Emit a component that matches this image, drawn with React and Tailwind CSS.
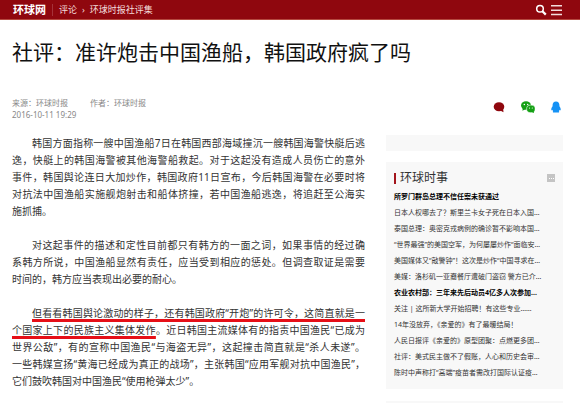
import React from 'react';

const paragraphs = [
  [
    '韩国方面指称一艘中国渔船7日在韩国西部海域撞沉一艘韩国海警快艇后逃',
    '逸，快艇上的韩国海警被其他海警船救起。对于这起没有造成人员伤亡的意外',
    '事件，韩国舆论连日大加炒作，韩国政府11日宣布，今后韩国海警在必要时将',
    '对抗法中国渔船实施舰炮射击和船体挤撞，若中国渔船逃逸，将追赶至公海实',
    '施抓捕。',
  ],
  [
    '对这起事件的描述和定性目前都只有韩方的一面之词，如果事情的经过确',
    '系韩方所说，中国渔船显然有责任，应当受到相应的惩处。但调查取证是需要',
    '时间的，韩方应当表现出必要的耐心。',
  ],
  [
    <Marked>但看看韩国舆论激动的样子，还有韩国政府“开炮”的许可令，这简直就是一</Marked>,
    <><Marked>个国家上下的民族主义集体发作</Marked>。近日韩国主流媒体有的指责中国渔民“已成为</>,
    '世界公敌”，有的宣称中国渔民“与海盗无异”，这起撞击简直就是“杀人未遂”。',
    '一些韩媒宣扬“黄海已经成为真正的战场”，主张韩国“应用军舰对抗中国渔民”，',
    '它们鼓吹韩国对中国渔民“使用枪弹太少”。',
  ],
];

const news = [
  { title: '所罗门群岛总理不信任案未获通过', bold: true },
  { title: '日本人权哪去了？斯里兰卡女子死在日本入国…' },
  { title: '泰国总理：奥密克戎病例的确诊暂不影响本国…' },
  { title: '“世界最强”的美国空军，为何屡屡炒作“面临安…' },
  { title: '美国媒体又“敲警钟”！这次是炒作“中国寻求在…' },
  { title: '美媒：洛杉矶一亚裔餐厅遭破门盗窃 警方已介…' },
  { title: '农业农村部：三年来先后动员4亿多人次参加…', bold: true },
  { title: '关注 | 这所新大学开始招聘！有这些专业……' },
  { title: '14年没放弃，《亲爱的》有了最暖结局！' },
  { title: '人民日报评《亲爱的》原型团聚：点燃更多团…' },
  { title: '社评：美式民主做不了假账，人心和历史会审…' },
  { title: '陈时中声称打“高端”疫苗者需改打国际认证疫…' },
];

function Marked({ children }) {
  return (
    <span className="underline decoration-[#e60f17] decoration-[3px] underline-offset-2 [text-decoration-skip-ink:none]">
      {children}
    </span>
  );
}

const Header = () => (
  <header className="flex h-5 items-center justify-between border-b border-[#b5483f] bg-[#8f070e] pl-[13px] pr-[18px] text-white">
    <nav className="flex items-center text-[9px] leading-none text-[#f3dcdc]">
      <a href="#" className="text-[11px] font-bold text-white">环球网</a>
      <span className="mx-[6px] h-3 w-px bg-[#a53239]"></span>
      <a href="#">评论</a>
      <span className="mx-[5px]">›</span>
      <a href="#">环球时报社评集</a>
    </nav>
    <div className="flex items-center gap-1">
      <button aria-label="搜索">
        <svg className="block h-3 w-3" viewBox="0 0 12 12" fill="none" stroke="currentColor">
          <circle cx="5" cy="4.7" r="3.3" strokeWidth="1.5" />
          <path d="M7.4 7.2l3.4 3.4" strokeWidth="2.2" />
        </svg>
      </button>
      <button aria-label="菜单">
        <svg className="block h-3 w-[11px]" viewBox="0 0 11 12" fill="#f3dcdc">
          <path d="M0 1h11v1.5H0zM0 5.4h11v1.5H0zM0 9.8h11v1.5H0z" />
        </svg>
      </button>
    </div>
  </header>
);

const Share = () => (
  <div className="flex items-center gap-4 pb-1 pr-[2px]">
    <button aria-label="评论">
      <svg className="block h-3 w-3" viewBox="0 0 12 12" fill="#8f070e">
        <ellipse cx="6" cy="5.7" rx="5.3" ry="4.5" />
        <path d="M6.5 9l3.6-1.4.4 3.6-2.4-1.3z" />
      </svg>
    </button>
    <button aria-label="微信">
      <svg className="block h-3 w-[14px]" viewBox="0 0 14 12">
        <g fill="#14a014">
          <ellipse cx="5" cy="4.5" rx="5" ry="4.2" />
          <path d="M1.8 7l-.4 2.8 3-1.5z" />
          <ellipse cx="9.9" cy="7.9" rx="4.3" ry="3.8" stroke="#fff" strokeWidth=".6" />
          <path d="M10.6 11l2.4 1-.3-2.4z" />
        </g>
        <g fill="#fff">
          <circle cx="3.3" cy="3.4" r=".75" />
          <circle cx="6.7" cy="3.4" r=".75" />
          <circle cx="8.5" cy="7" r=".6" />
          <circle cx="11.3" cy="7" r=".6" />
        </g>
      </svg>
    </button>
    <button aria-label="QQ">
      <svg className="block h-3 w-[10px]" viewBox="0 0 10 12" fill="#1592f5">
        <path d="M5 .5c2.2 0 3.4 1.5 3.4 3.6v1.2c.8 1 1.5 2.3 1.3 3.7-.1.5-.6.4-1.1-.2-.1.6-.4 1-.8 1.4.7.4.5 1.3-.5 1.3H2.7c-1 0-1.2-.9-.5-1.300-.4-.4-.7-.8-.8-1.400-.5.6-1 .7-1.100.2C.1 7.600.8 6.300 1.600 5.300V4.100C1.600 2 2.800.5 5 .5z" />
      </svg>
    </button>
  </div>
);

const Sidebar = () => (
  <aside className="flex w-[177px] shrink-0 flex-col">
    <div className="mb-[11px] h-4 bg-[#f8f8f8]"></div>
    <section className="bg-[#f8f8f8] p-2">
      <div className="mb-[3px] flex h-4 items-center justify-between">
        <h2 className="flex items-center gap-1 text-[12px] leading-4 text-[#333]">
          <span className="h-[11px] w-[2px] bg-[#a3151c]"></span>
          环球时事
        </h2>
        <button aria-label="更多" className="flex h-2 w-2 items-center justify-center gap-px bg-[#c4c4c4]">
          <i className="h-px w-px bg-white"></i>
          <i className="h-px w-px bg-white"></i>
          <i className="h-px w-px bg-white"></i>
        </button>
      </div>
      <ul>
        {news.map((n) => (
          <li key={n.title} className="h-4 whitespace-nowrap text-[7px] leading-4 text-[#333]">
            <a href="#" className={n.bold ? 'font-bold text-black' : ''}>{n.title}</a>
          </li>
        ))}
      </ul>
    </section>
    <div className="mt-3 h-4 bg-[#f8f8f8]"></div>
  </aside>
);

const Article = () => (
  <article className="min-w-0 flex-1 space-y-[17px] text-[10px] leading-[17px] text-[#333]">
    {paragraphs.map((lines, p) => (
      <p key={p}>
        {lines.map((line, i) => (
          <span
            key={i}
            className={`block whitespace-nowrap ${i === 0 ? 'pl-5' : ''} ${i < lines.length - 1 ? 'text-justify [text-align-last:justify]' : ''}`}
          >
            {line}
          </span>
        ))}
      </p>
    ))}
  </article>
);

export default function App() {
  return (
    <div lang="zh-CN" className="h-screen overflow-hidden bg-white font-['Noto_Sans','Noto_Sans_CJK_SC',sans-serif]">
      <Header />
      <main className="pl-3 pr-[17px]">
        <h1 className="mt-4 text-[21px] leading-8 text-[#111]">社评：准许炮击中国渔船，韩国政府疯了吗</h1>
        <div className="mb-[14px] mt-[29px] flex items-center justify-between">
          <div className="text-[8px] leading-3 text-[#888]">
            <div className="flex gap-[22px]">
              <span>来源：环球时报</span>
              <span>作者：环球时报</span>
            </div>
            <time className="block">2016-10-11 19:29</time>
          </div>
          <Share />
        </div>
        <div className="flex gap-[21px]">
          <Article />
          <Sidebar />
        </div>
      </main>
    </div>
  );
}
